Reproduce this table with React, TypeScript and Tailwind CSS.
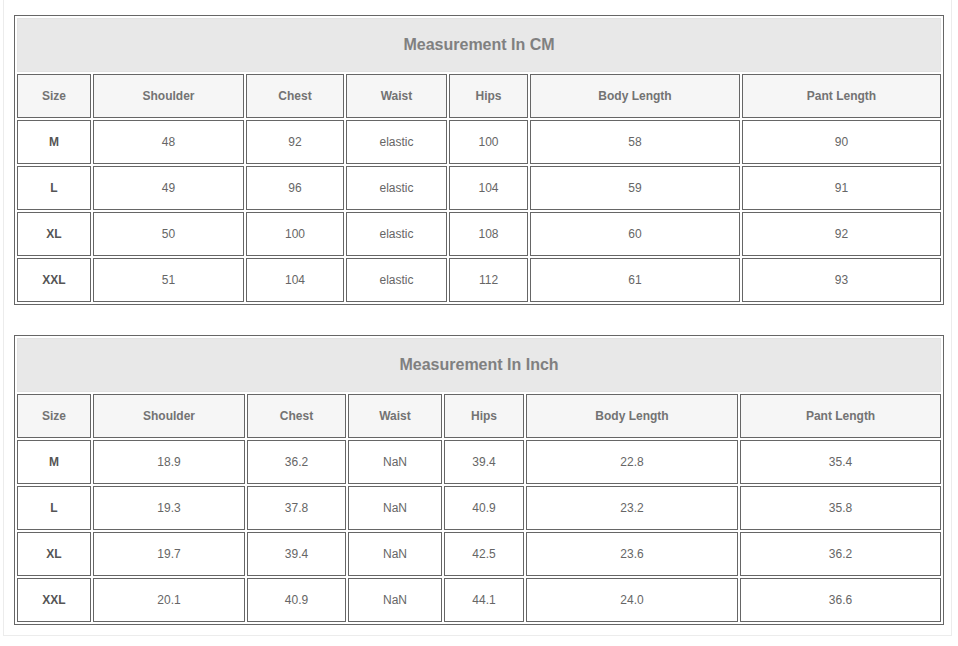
import React from 'react';

type Table = {
  title: string;
  cols: number[];
  rows: string[][];
};

const HEADERS = ['Size', 'Shoulder', 'Chest', 'Waist', 'Hips', 'Body Length', 'Pant Length'];

const TABLES: Table[] = [
  {
    title: 'Measurement In CM',
    cols: [74, 151, 98, 101, 79, 210, 199],
    rows: [
      ['M', '48', '92', 'elastic', '100', '58', '90'],
      ['L', '49', '96', 'elastic', '104', '59', '91'],
      ['XL', '50', '100', 'elastic', '108', '60', '92'],
      ['XXL', '51', '104', 'elastic', '112', '61', '93'],
    ],
  },
  {
    title: 'Measurement In Inch',
    cols: [74, 152, 99, 94, 80, 212, 201],
    rows: [
      ['M', '18.9', '36.2', 'NaN', '39.4', '22.8', '35.4'],
      ['L', '19.3', '37.8', 'NaN', '40.9', '23.2', '35.8'],
      ['XL', '19.7', '39.4', 'NaN', '42.5', '23.6', '36.2'],
      ['XXL', '20.1', '40.9', 'NaN', '44.1', '24.0', '36.6'],
    ],
  },
];

function SizeTable({ table }: { table: Table }) {
  return (
    <table className="table-fixed w-[930px] border-separate border-spacing-[2px] border border-[#666] ml-[10px]">
      <colgroup>
        {table.cols.map((w, i) => (
          <col key={i} style={{ width: w }} />
        ))}
      </colgroup>
      <tbody>
        <tr>
          <td colSpan={7} className="h-[54px] p-0 border border-[#e2e2e2] bg-[#e8e8e8] text-center text-[16px] font-bold text-[#808080]">
            {table.title}
          </td>
        </tr>
        <tr>
          {HEADERS.map(h => (
            <td key={h} className="h-[44px] p-0 border border-[#666] bg-[#f6f6f6] text-center text-[12px] font-bold text-[#737373]">
              {h}
            </td>
          ))}
        </tr>
        {table.rows.map(r => (
          <tr key={r[0]}>
            {r.map((v, i) => (
              <td
                key={i}
                className={
                  i === 0
                    ? 'h-[44px] p-0 border border-[#666] bg-white text-center text-[12px] font-bold text-[#555]'
                    : 'h-[44px] p-0 border border-[#666] bg-white text-center text-[12px] text-[#666]'
                }
              >
                {v}
              </td>
            ))}
          </tr>
        ))}
      </tbody>
    </table>
  );
}

export default function App() {
  return (
    <div className="w-[958px] h-[646px] bg-white font-['Liberation_Sans',Arial,sans-serif]">
      <div className="ml-[3px] w-[949px] border-x border-b border-[#ececec] pt-[15px] pb-[10px] flex flex-col gap-[30px]">
        {TABLES.map(t => (
          <SizeTable key={t.title} table={t} />
        ))}
      </div>
    </div>
  );
}
